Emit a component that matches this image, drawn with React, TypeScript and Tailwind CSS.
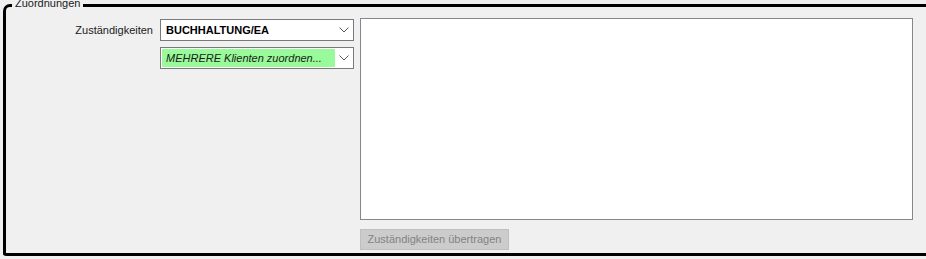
import React from "react";

function Chevron() {
  return (
    <svg width="10" height="6" viewBox="0 0 10 6" className="shrink-0">
      <polyline points="0.5,0.5 5,5 9.5,0.5" fill="none" stroke="#5a5a5a" strokeWidth="1" />
    </svg>
  );
}

export default function App() {
  const font = { fontFamily: '"Liberation Sans", Arial, sans-serif' };
  return (
    <div className="w-[926px] h-[259px] overflow-hidden bg-[#f0f0f0] relative text-[11px] text-black" style={font}>
      <div className="ml-[3px] mt-[4px] w-[960px] h-[252px] border-t-[3px] border-l-[3px] border-b-[3px] border-black rounded-tl-[7px] rounded-bl-[3px] relative">
        <div className="absolute left-[6px] top-[-12px] px-[3px] bg-[#f0f0f0] leading-[16px] text-[#1a1a1a] whitespace-nowrap">Zuordnungen</div>
        <div className="flex pt-[11px]">
          <div className="w-[154px] pr-[7px] mt-[1px] h-[22px] flex items-center justify-end whitespace-nowrap text-[#1a1a1a]">Zuständigkeiten</div>
          <div className="w-[194px] flex flex-col gap-[6px] mt-[1px]">
            <div className="h-[22px] border border-[#7a7a7a] bg-white flex items-center pl-[5px] pr-[4px]">
              <span className="flex-1 font-bold whitespace-nowrap">BUCHHALTUNG/EA</span>
              <Chevron />
            </div>
            <div className="h-[22px] border border-[#7a7a7a] bg-white flex items-center p-[1px] pr-[4px]">
              <span className="h-full w-[173px] bg-[#98fa98] italic flex items-center pl-[4px] whitespace-nowrap text-[#1a1a1a]">MEHRERE Klienten zuordnen...</span>
              <span className="flex-1" />
              <Chevron />
            </div>
          </div>
          <div className="ml-[6px] flex flex-col">
            <div className="w-[553px] h-[202px] border border-[#828790] bg-white" />
            <div className="mt-[9px] w-[149px] h-[21px] border border-[#bfbfbf] bg-[#cccccc] text-[#838383] flex items-center justify-center whitespace-nowrap">
              Zuständigkeiten übertragen
            </div>
          </div>
        </div>
      </div>
    </div>
  );
}
